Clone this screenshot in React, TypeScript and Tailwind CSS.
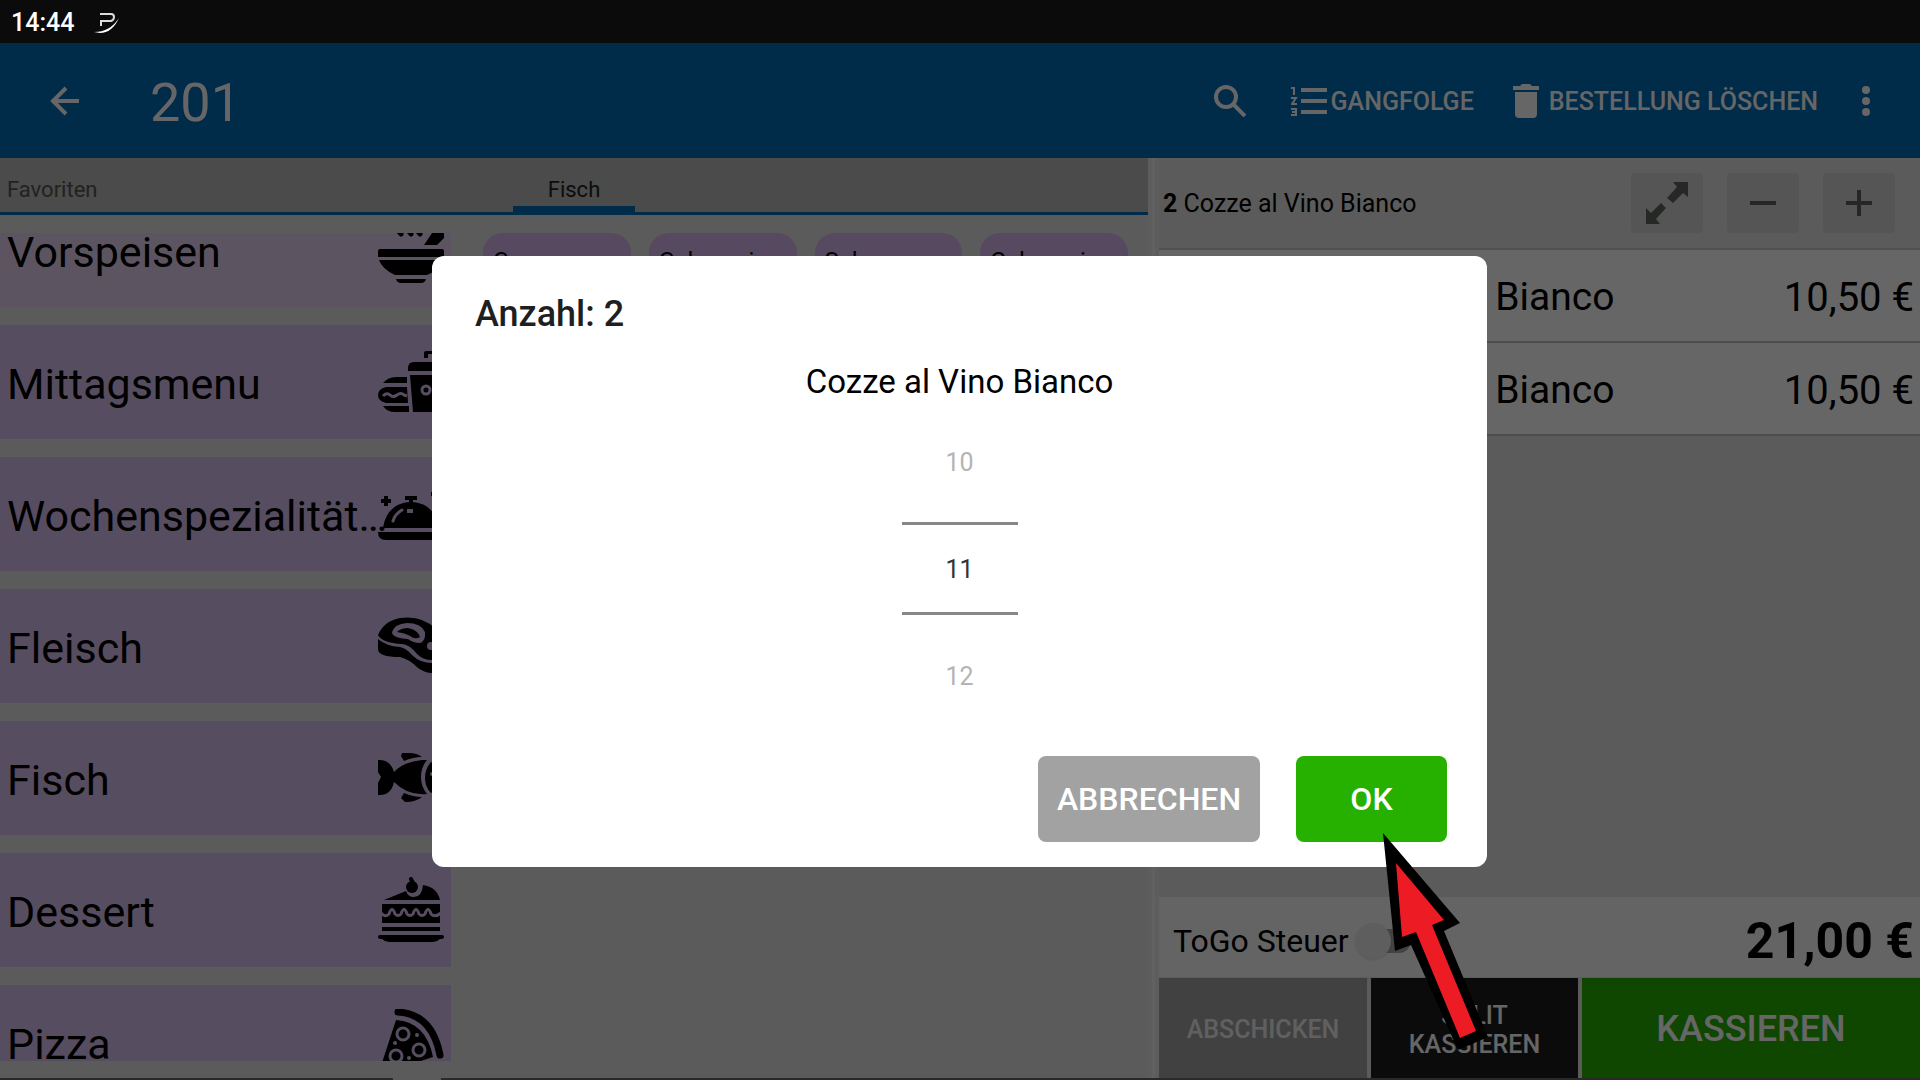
import { useState } from "react";
import type { ReactNode } from "react";

const products = ["Cozze", "Calamari", "Salmone", "Calamari"];

const orderItems = [
  { qty: 1, name: "Cozze al Vino Bianco", price: "10,50 €" },
  { qty: 1, name: "Cozze al Vino Bianco", price: "10,50 €" },
];

function Icon({ children }: { children: ReactNode }) {
  return (
    <svg viewBox="0 0 66 66" className="absolute right-[7px] h-[66px] w-[66px]" aria-hidden="true">
      {children}
    </svg>
  );
}

// Category icons, the lilac fills use the row colour to cut shapes out
const categories = [
  {
    name: "Vorspeisen",
    bg: "bg-[#e6d5f3]",
    icon: (
      <Icon>
        <path d="M58 4h8v17l-7 7H46L58 10z" />
        <path d="M19 12l4 5M29 12l4 5M38 12l4 5" stroke="#000" strokeWidth="5" strokeLinecap="round" />
        <path d="M0 34q0-2 2-2h62q2 0 2 2v6H0z" />
        <path d="M1 43h64q-2 10-16 15H17Q4 52 1 43z" />
        <path d="M18 62h30q-1 4-5 4H23q-4 0-5-4z" />
      </Icon>
    ),
  },
  {
    name: "Mittagsmenu",
    bg: "bg-[#dac0f0]",
    icon: (
      <Icon>
        <path d="M46 9V4q0-2 2-2h8v3h-6v4z" />
        <path d="M30 22v-3q0-6 6-6h22q6 0 6 6v3z" />
        <path d="M32 26h32l-3 37H35z" />
        <circle cx="48" cy="41" r="4" fill="none" stroke="#dac0f0" strokeWidth="3" />
        <path d="M5 34q5-6 13-6h11v6zM8 38h21l1 16H8q-8-2-8-8t8-8zM5 57h26v6H17Q9 63 5 57z" />
        <path d="M5 47q4-4 7-1t7 0 7 0l3 1" fill="none" stroke="#dac0f0" strokeWidth="3" />
      </Icon>
    ),
  },
  {
    name: "Wochenspezialitäten",
    bg: "bg-[#dac0f0]",
    icon: (
      <Icon>
        <path d="M8 15v10M3 20h10M53 13h10M58 8v10" stroke="#000" strokeWidth="4" />
        <path d="M27 15h12v4h-4v4h-4v-4h-4z" />
        <path d="M5 47Q7 32 18 25q15-8 30 0 11 7 13 22z" />
        <path d="M15 40q2-7 9-11" fill="none" stroke="#dac0f0" strokeWidth="3" strokeLinecap="round" />
        <path d="M29 30h6" stroke="#dac0f0" strokeWidth="4" />
        <path d="M0 51h66q0 8-8 8H8q-8 0-8-8z" />
      </Icon>
    ),
  },
  {
    name: "Fleisch",
    bg: "bg-[#dac0f0]",
    icon: (
      <Icon>
        <path d="M0 22Q6 8 22 5q22-3 36 11 8 8 8 19-1 12-12 12-9 0-15-6-8-10-15-10Q4 30 0 22z" />
        <path d="M0 26q8 7 22 8 6 1 12 8 8 8 20 8 9 0 12-6-1 16-12 16-7 0-14-5-9-9-18-11Q0 44 0 36z" />
        <path d="M14 19q2-8 15-9 14 0 18 9 1 9-5 11-7 0-12-4-16-1-16-7z" fill="#dac0f0" />
        <path d="M19 19q4-4 11-4 10 2 12 9-5 3-10-1-5-3-13-4z" />
        <circle cx="53" cy="33" r="4" fill="#dac0f0" />
      </Icon>
    ),
  },
  {
    name: "Fisch",
    bg: "bg-[#dac0f0]",
    icon: (
      <Icon>
        <path d="M0 15q12-1 16 12 9-10 28-12h5q-6 7-6 17t6 17q-19 2-33-12-3 14-16 13V38l3-6-3-5z" />
        <path d="M53 17q10 4 13 15-3 11-13 16-6-6-6-15t6-16z" />
        <path d="M23 11l1-3h7q8 0 13 4-9 0-18 4zM23 53l3-5q9 4 18 4-6 5-17 5z" />
        <circle cx="54" cy="29" r="2" fill="#dac0f0" />
      </Icon>
    ),
  },
  {
    name: "Dessert",
    bg: "bg-[#dac0f0]",
    icon: (
      <Icon>
        <path d="M6 23l22-9q2 6 8 6 8 0 9-12 14 2 17 15z" />
        <circle cx="34" cy="10" r="6" />
        <path d="M35 6l-2-4" stroke="#000" strokeWidth="4" strokeLinecap="round" />
        <path d="M4 27h58v19H4z" />
        <path d="M3 36q4 5 8 1 3-9 6 0 3 3 6 0 3-9 6 0 3 3 6 0 3-9 6 0 3 3 6 0 3-9 6 0 4 4 10-1" fill="none" stroke="#dac0f0" strokeWidth="3" />
        <path d="M4 50h58v4H4z" />
        <path d="M2 58h62q2 0 2 2t-4 2q-3 3-7 3H11q-4 0-7-3-4 0-4-2t2-2z" />
      </Icon>
    ),
  },
  {
    name: "Pizza",
    bg: "bg-[#dac0f0]",
    icon: (
      <Icon>
        <path d="M20 3q34 2 42 43" fill="none" stroke="#000" strokeWidth="7" strokeLinecap="round" />
        <path d="M18 11q30 2 37 37L0 66z" />
        <g fill="none" stroke="#dac0f0" strokeWidth="3">
          <circle cx="25" cy="25" r="6" />
          <circle cx="41" cy="41" r="6" />
          <circle cx="18" cy="47" r="6" />
        </g>
        <g fill="#dac0f0">
          <circle cx="39" cy="26" r="2" />
          <circle cx="17" cy="34" r="2" />
          <circle cx="31" cy="49" r="2" />
        </g>
      </Icon>
    ),
  },
];

function StatusBar() {
  return (
    <div className="relative z-20 flex h-[43px] shrink-0 items-center gap-5 bg-[#0b0b0b] px-[11px] pt-0.5 text-[25px] font-medium text-white">
      <span>14:44</span>
      <svg viewBox="0 0 26 22" className="h-[22px] w-[26px]" fill="none" aria-hidden="true">
        <path d="M6 2h11q3 0 3 3t-3 4H7v5" stroke="#ddd" strokeWidth="2" />
        <path d="M0 20Q16 20 25 6 18 21 6 21z" fill="#fff" />
      </svg>
    </div>
  );
}

function AppBar() {
  return (
    <header className="flex h-[115px] shrink-0 items-center bg-[#006bb6] pr-[50px] pl-[49px] text-white">
      <button type="button" aria-label="Zurück">
        <svg viewBox="0 0 32 32" className="h-8 w-8" fill="none" stroke="currentColor" strokeWidth="4">
          <path d="M30 16H5M17 3L4 16l13 13" />
        </svg>
      </button>
      <h1 className="ml-[69px] flex-1 pt-1 text-[54px] leading-none">201</h1>
      <nav className="flex items-center text-[25px] font-medium">
        <button type="button" aria-label="Suchen" className="mr-[45px]">
          <svg viewBox="0 0 32 32" className="h-8 w-8" fill="none" stroke="currentColor" strokeWidth="4">
            <circle cx="12" cy="12" r="10" />
            <path d="M19 19l12 12" />
          </svg>
        </button>
        <button type="button" className="mr-[39px] flex items-center gap-1">
          <svg viewBox="0 0 36 30" className="h-[30px] w-9" fill="none" stroke="currentColor" aria-hidden="true">
            <path d="M10 4h26M10 15h26M10 26h26" strokeWidth="4" />
            <path d="M0 2h3v7M0 12h5l-4 6h5M0 23h5v6H0M1 26h4" strokeWidth="2" />
          </svg>
          <span className="pt-0.5">GANGFOLGE</span>
        </button>
        <button type="button" className="mr-[44px] flex items-center gap-[10px]">
          <svg viewBox="0 0 26 34" className="h-[34px] w-[26px]" fill="currentColor" aria-hidden="true">
            <path d="M0 2h7l2-2h8l2 2h7v4H0zM2 8h22v22q0 4-4 4H6q-4 0-4-4z" />
          </svg>
          <span className="pt-0.5">BESTELLUNG LÖSCHEN</span>
        </button>
        <button type="button" aria-label="Mehr">
          <svg viewBox="0 0 8 30" className="h-[30px] w-2" fill="currentColor">
            <circle cx="4" cy="4" r="4" />
            <circle cx="4" cy="15" r="4" />
            <circle cx="4" cy="26" r="4" />
          </svg>
        </button>
      </nav>
    </header>
  );
}

function Menu() {
  return (
    <main className="flex min-w-0 flex-1 flex-col">
      <div className="flex h-[57px] shrink-0 border-b-3 border-[#006bb6] bg-[#b9bcb9] text-[22px]">
        <button type="button" className="w-[513px] pt-2 pl-[7px] text-left text-[#555]">Favoriten</button>
        <button type="button" className="w-[122px] border-b-6 border-[#006bb6] pt-[14px] text-[#222]">Fisch</button>
      </div>
      <div className="mt-[18px] mb-[17px] flex min-h-0 flex-1 gap-8 overflow-hidden">
        <div className="-mt-10 flex w-[451px] shrink-0 flex-col gap-[18px]">
          {categories.map((category) => (
            <button
              key={category.name}
              type="button"
              className={`relative flex h-[114px] shrink-0 items-center pl-[7px] text-left text-[43px] ${category.bg}`}
            >
              <span className="w-[388px] truncate pt-1">{category.name}</span>
              {category.icon}
            </button>
          ))}
        </div>
        <div className="grid flex-1 grid-cols-4 content-start gap-[18px] pr-5">
          {products.map((product, i) => (
            <button key={i} type="button" className="flex h-[114px] items-start rounded-[20px] bg-[#d7b7f0] px-[10px] pt-4 text-left text-2xl leading-6">
              {product}
            </button>
          ))}
        </div>
      </div>
    </main>
  );
}

function Order() {
  const [toGo, setToGo] = useState(false);

  return (
    <aside className="flex w-[761px] shrink-0 flex-col">
      <div className="flex h-[92px] shrink-0 items-center gap-6 border-b-2 border-[#c8c8c8] pr-[25px] pl-1">
        <p className="flex-1 pt-0.5 text-[25px]">
          <b>2</b> Cozze al Vino Bianco
        </p>
        <button type="button" aria-label="Vergrößern" className="flex h-[60px] w-[72px] items-center justify-center rounded bg-[#d4d4d4] text-[#606560]">
          <svg viewBox="0 0 44 44" className="h-11 w-11" fill="currentColor">
            <path d="M28 1h15v15l-5-4-10 10-6-5 10-11zM1 43V27l5 5 10-10 5 5-10 11 4 5z" />
          </svg>
        </button>
        <button type="button" aria-label="Weniger" className="flex h-[60px] w-[72px] items-center justify-center rounded bg-[#d4d4d4] text-[#606060]">
          <span className="h-1 w-[26px] bg-current" />
        </button>
        <button type="button" aria-label="Mehr" className="flex h-[60px] w-[72px] items-center justify-center rounded bg-[#d4d4d4] text-[#606060]">
          <svg viewBox="0 0 26 26" className="h-[26px] w-[26px]" stroke="currentColor" strokeWidth="4">
            <path d="M13 0v26M0 13h26" />
          </svg>
        </button>
      </div>
      <ul>
        {orderItems.map((item, i) => (
          <li key={i} className="flex h-[93px] items-center border-b-2 border-[#c0c0c0] bg-white pt-1 pr-1.5 text-[39px]">
            <span className="w-[92px] text-center">{item.qty}</span>
            <span className="flex-1">{item.name}</span>
            <span className="text-[40px]">{item.price}</span>
          </li>
        ))}
      </ul>
      <div className="mt-auto flex h-20 shrink-0 items-center bg-[#fbfbfb] pt-[7px] pr-1.5 pl-[14px]">
        <label htmlFor="togo" className="text-[32px]">ToGo Steuer</label>
        <span className="relative ml-1.5 flex h-9 w-16 items-center">
          <input
            id="togo"
            type="checkbox"
            role="switch"
            checked={toGo}
            onChange={(e) => setToGo(e.target.checked)}
            className="ml-2 h-6 w-12 appearance-none rounded-full bg-[#a8a8a8]"
          />
          <span className="pointer-events-none absolute left-0 h-9 w-9 rounded-full bg-[#ececec] shadow" />
        </span>
        <strong className="ml-auto text-[50px] leading-none">21,00 €</strong>
      </div>
      <div className="mt-px flex h-[100px] shrink-0 gap-1 text-[25px] leading-[29px] font-medium text-white">
        <button type="button" className="w-[208px] bg-[#a4a4a4] pt-[3px] text-[#f0f0f0]">ABSCHICKEN</button>
        <button type="button" className="w-[207px] bg-[#1c1c1c] px-6 pt-[3px]">SPLIT KASSIEREN</button>
        <button type="button" className="flex-1 bg-[#26b000] pt-[3px] text-[36px]">KASSIEREN</button>
      </div>
    </aside>
  );
}

function QuantityDialog() {
  return (
    <div role="dialog" aria-modal="true" aria-labelledby="dialog-title" className="relative flex h-[611px] w-[1055px] flex-col rounded-xl bg-white px-[43px] pt-9">
      <h2 id="dialog-title" className="text-[36px] leading-[44px] font-medium text-[#1f1f1f]">Anzahl: 2</h2>
      <p className="mt-6 text-center text-[33px] leading-[44px]">Cozze al Vino Bianco</p>
      <div className="mx-auto mt-[23px] flex w-[116px] flex-col items-center text-[25px] text-[#b4b4b4]">
        <button type="button" className="h-[72px]">10</button>
        <span className="mt-[23px] mb-[26px] flex h-[93px] w-full items-center justify-center border-y-3 border-[#888] pt-0.5 text-[#333]">11</span>
        <button type="button" className="h-[72px]">12</button>
      </div>
      <div className="absolute right-10 bottom-[25px] flex gap-9 text-[32px] font-medium text-white">
        <button type="button" className="h-[86px] w-[222px] rounded-lg bg-[#a2a2a2]">ABBRECHEN</button>
        <button type="button" className="h-[86px] w-[151px] rounded-lg bg-[#26b000]">OK</button>
      </div>
      {/* Pointer arrow on the OK button */}
      <svg viewBox="0 0 106 218" className="pointer-events-none absolute top-[577px] left-[951px] h-[218px] w-[106px]" aria-hidden="true">
        <path d="M0 0L77 90 61 98 105 204 75 217 28 112 12 118z" />
        <path d="M13 30L61 87 49 92 93 198 77 205 33 99 19 104z" fill="#ed1c24" />
      </svg>
    </div>
  );
}

export default function App() {
  return (
    <div className="flex h-screen flex-col overflow-hidden bg-[#e4e4e4] font-[Roboto,sans-serif] text-black">
      <StatusBar />
      <AppBar />
      <div className="flex min-h-0 flex-1">
        <Menu />
        <div className="w-[11px] shrink-0 border-x-4 border-[#e8e8e8] bg-[#f2f2f2]" />
        <Order />
      </div>
      <div className="h-0.5 shrink-0 bg-[#666]">
        <div className="ml-[393px] h-full w-12 bg-[#e4e4e4]" />
      </div>
      <div className="fixed inset-0 z-10 flex items-center justify-center bg-black/60 pt-[43px] pr-px">
        <QuantityDialog />
      </div>
    </div>
  );
}
